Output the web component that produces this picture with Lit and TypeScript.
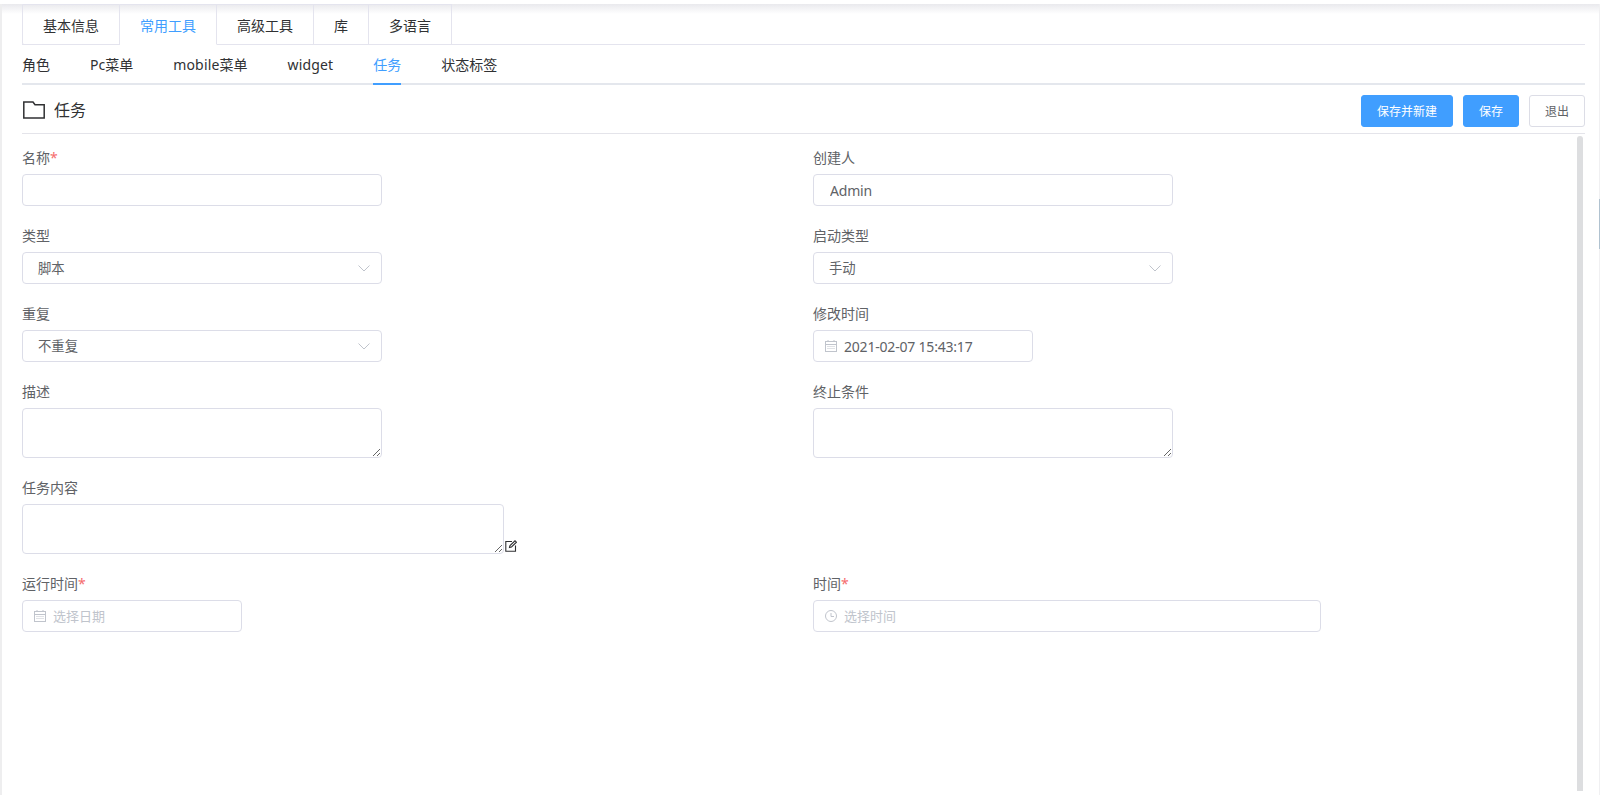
import { LitElement, html, css, svg } from "lit";
import { customElement } from "lit/decorators.js";

const calendar = svg`<svg class="ico" viewBox="0 0 12 12" width="12" height="12" fill="none" stroke="#c0c4cc" stroke-width="1"><rect x="0.5" y="1.5" width="11" height="10"/><path d="M0.5 4.5h11M3 0v2M9 0v2"/><path d="M2.5 6.5h7M2.5 8.5h7" stroke-dasharray="1 1"/></svg>`;
const clock = svg`<svg class="ico" viewBox="0 0 12 12" width="12" height="12" fill="none" stroke="#c0c4cc" stroke-width="1"><circle cx="6" cy="6" r="5.5"/><path d="M6 3v3.5h3"/></svg>`;
const chevron = svg`<svg class="chev" viewBox="0 0 12 7" width="12" height="7" fill="none" stroke="#c0c4cc" stroke-width="1"><path d="M0.5 0.5L6 6L11.5 0.5"/></svg>`;

@customElement("app-root")
export class AppRoot extends LitElement {
  static styles = css`
    :host {
      display: block;
      width: 1600px;
      height: 795px;
      overflow: hidden;
      background: #fff;
      font-family: "Noto Sans", "Noto Sans CJK SC", sans-serif;
      font-size: 14px;
      color: #303133;
      box-sizing: border-box;
      position: relative;
    }
    .page {
      height: 795px;
      box-sizing: border-box;
      margin-top: 4px;
      border-left: 2px solid #eeeeef;
      border-right: 1px solid #f0f0f2;
      padding: 0 14px 0 20px;
      background: linear-gradient(#e9e9ed, #fff 10px);
    }
    .edge {
      position: absolute;
      top: 199px;
      right: 0;
      width: 1px;
      height: 50px;
      background: #b0c2d0;
    }
    .tabs {
      display: flex;
      height: 41px;
      box-sizing: border-box;
      border-bottom: 1px solid #e4e4ee;
    }
    .tab {
      display: flex;
      align-items: center;
      padding: 0 20px;
      border: 1px solid #e4e4ee;
      border-left-width: 0;
      height: 41px;
      box-sizing: border-box;
      margin-bottom: -1px;
    }
    .tab:first-child {
      border-left-width: 1px;
      border-bottom-left-radius: 2px;
    }
    .tab.active {
      color: #409eff;
      border-bottom-color: #fff;
    }
    .subtabs {
      display: flex;
      height: 40px;
      box-sizing: border-box;
      border-bottom: 2px solid #e4e7ed;
    }
    .sub {
      height: 40px;
      box-sizing: border-box;
      display: flex;
      align-items: center;
      margin-right: 40px;
      border-bottom: 2px solid transparent;
      white-space: nowrap;
    }
    .sub .wide {
      letter-spacing: 0.17px;
    }
    .sub.active {
      color: #409eff;
      border-bottom-color: #409eff;
    }
    .head {
      display: flex;
      align-items: center;
      height: 49px;
      box-sizing: border-box;
      border-bottom: 1px solid #e4e4ea;
    }
    .head svg {
      margin: 2px 9px 0 1px;
    }
    .title {
      font-size: 16px;
      color: #303133;
      flex: 1;
    }
    .btn {
      height: 32px;
      box-sizing: border-box;
      padding: 0 15px;
      margin: 4px 0 0 10px;
      display: flex;
      align-items: center;
      font-size: 12px;
      border-radius: 3px;
      border: 1px solid #409eff;
      background: #409eff;
      color: #fff;
    }
    .btn.plain {
      background: #fff;
      border-color: #dcdde6;
      color: #606266;
    }
    .body {
      position: relative;
      height: 657px;
      padding-top: 8px;
      box-sizing: border-box;
    }
    .bar {
      position: absolute;
      top: 2px;
      right: 2px;
      bottom: 0;
      width: 6px;
      background: #dddee0;
      border-radius: 3px 3px 0 0;
    }
    .form {
      display: grid;
      grid-template-columns: 791px 1fr;
    }
    .field {
      margin-bottom: 14px;
      min-width: 0;
    }
    .label {
      height: 32px;
      line-height: 32px;
      color: #606266;
    }
    .req {
      color: #f56c6c;
    }
    .ctl {
      display: flex;
      align-items: center;
      height: 32px;
      box-sizing: border-box;
      border: 1px solid #dcdde8;
      border-radius: 4px;
      background: #fff;
      color: #606266;
      font: inherit;
      padding: 0 15px;
      outline: none;
    }
    input.ctl {
      letter-spacing: -0.2px;
      padding-left: 16px;
    }
    .w360 { width: 360px; }
    .w220 { width: 220px; }
    .w508 { width: 508px; }
    .w482 { width: 482px; }
    .select {
      justify-content: space-between;
      padding-right: 11px;
      font-size: 13.33px;
    }
    .select span {
      padding-bottom: 2px;
    }
    .date { padding: 0 11px; }
    .stamp { letter-spacing: -0.2px; }
    .ico { margin-right: 7px; flex: none; }
    .ph { color: #c0c4cc; font-size: 13px; padding-bottom: 2px; }
    textarea.ctl {
      display: block;
      height: 50px;
      padding: 5px 15px;
      resize: both;
    }
    .row-edit {
      display: flex;
      align-items: flex-end;
    }
    .edit {
      margin: 0 0 2px 1px;
    }
  `;

  private label(t: string, req = false) {
    return html`<div class="label">${t}${req ? html`<span class="req">*</span>` : ""}</div>`;
  }

  private select(label: string, value: string) {
    return html`<div class="field">${this.label(label)}<div class="ctl select w360"><span>${value}</span>${chevron}</div></div>`;
  }

  render() {
    return html`<div class="page">
      <div class="tabs">
        <div class="tab">基本信息</div>
        <div class="tab active">常用工具</div>
        <div class="tab">高级工具</div>
        <div class="tab">库</div>
        <div class="tab">多语言</div>
      </div>
      <div class="subtabs">
        <div class="sub">角色</div>
        <div class="sub">Pc菜单</div>
        <div class="sub"><span class="wide">mobile</span>菜单</div>
        <div class="sub"><span class="wide">widget</span></div>
        <div class="sub active">任务</div>
        <div class="sub">状态标签</div>
      </div>
      <div class="head">
        <svg viewBox="0 0 22 18" width="22" height="18" fill="none" stroke="#303133" stroke-width="1.5"><path d="M0.8 17V1H10L12 3.8H21.2V17Z"/></svg>
        <div class="title">任务</div>
        <div class="btn">保存并新建</div>
        <div class="btn">保存</div>
        <div class="btn plain">退出</div>
      </div>
      <div class="body">
        <div class="bar"></div>
        <div class="form">
          <div class="field">${this.label("名称", true)}<input class="ctl w360" /></div>
          <div class="field">${this.label("创建人")}<input class="ctl w360" value="Admin" /></div>
          ${this.select("类型", "脚本")}
          ${this.select("启动类型", "手动")}
          ${this.select("重复", "不重复")}
          <div class="field">${this.label("修改时间")}<div class="ctl date w220">${calendar}<span class="stamp">2021-02-07 15:43:17</span></div></div>
          <div class="field">${this.label("描述")}<textarea class="ctl w360"></textarea></div>
          <div class="field">${this.label("终止条件")}<textarea class="ctl w360"></textarea></div>
          <div class="field">${this.label("任务内容")}
            <div class="row-edit"><textarea class="ctl w482"></textarea>
              <svg class="edit" viewBox="0 0 12 12" width="12" height="12" fill="none" stroke="#303133" stroke-width="1.1"><path d="M7 1.5H0.8V11.2H10.5V5.5"/><path d="M4.5 7.5L5 5.5L10 0.8L11.5 2.2L6.5 7Z"/></svg>
            </div>
          </div>
          <div></div>
          <div class="field">${this.label("运行时间", true)}<div class="ctl date w220">${calendar}<span class="ph">选择日期</span></div></div>
          <div class="field">${this.label("时间", true)}<div class="ctl date w508">${clock}<span class="ph">选择时间</span></div></div>
        </div>
      </div>
    </div>
    <div class="edge"></div>`;
  }
}
